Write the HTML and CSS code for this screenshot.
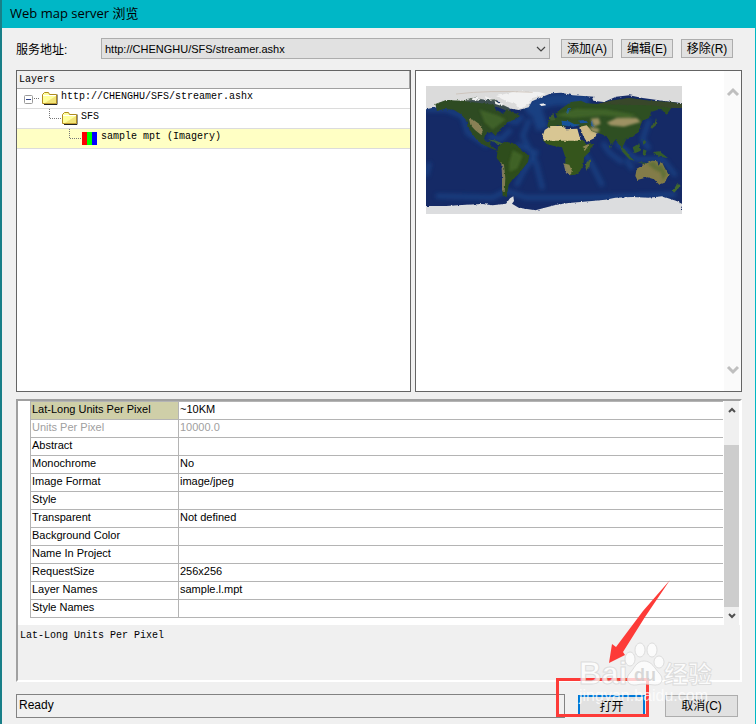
FILE: index.html
```html
<!DOCTYPE html>
<html lang="zh-CN">
  <head>
    <meta charset="UTF-8" />
    <meta name="viewport" content="width=device-width, initial-scale=1.0" />
    <title>Web map server 浏览</title>
    <link rel="stylesheet" href="styles.css">
  </head>
  <body>
    <div class="window">
      <header class="titlebar">Web map server 浏览</header>

      <main class="content">
        <div class="toolbar">
          <label for="server">服务地址:</label>
          <div class="combo">
            <select id="server">
              <option>http://CHENGHU/SFS/streamer.ashx</option>
            </select>
            <svg class="combo-arrow" width="10" height="6" viewBox="0 0 10 6">
              <path d="M1 1l4 4 4-4" fill="none" stroke="#444" stroke-width="1.2" />
            </svg>
          </div>
          <button type="button">添加(A)</button>
          <button type="button">编辑(E)</button>
          <button type="button">移除(R)</button>
        </div>

        <div class="panes">
          <section class="pane layers">
            <div class="layers-head">Layers</div>
            <ul class="tree">
              <li class="root">
                <svg width="18" height="20" viewBox="0 0 18 20">
                  <rect x="0.5" y="6.500" width="8" height="8" rx="1" fill="#fff" stroke="#999" />
                  <path d="M2 10.500h5" stroke="#2b3f8c" />
                  <path d="M10 9.500h6" stroke="#777" stroke-dasharray="1 1" />
                </svg>
                <svg width="16" height="20" viewBox="0 0 16 20">
                  <path d="M2 15.500h13V5.500" fill="none" stroke="#222" />
                  <path d="M.5 14.500v-9l2-2h4l1 2h7v9z" fill="#ffff9c" stroke="#b08c20" />
                  <path d="M1 6.500h13" stroke="#fff" />
                  <path d="M14 7v7.500H2z" fill="#e8d060" opacity=".6" />
                </svg>
                <span>http://CHENGHU/SFS/streamer.ashx</span>
              </li>
              <li class="level-1">
                <svg width="13" height="20" viewBox="0 0 13 20">
                  <path d="M.5 0v9.500H12" fill="none" stroke="#777" stroke-dasharray="1 1" />
                </svg>
                <svg width="16" height="20" viewBox="0 0 16 20">
                  <path d="M2 15.500h13V5.500" fill="none" stroke="#222" />
                  <path d="M.5 14.500v-9l2-2h4l1 2h7v9z" fill="#ffff9c" stroke="#b08c20" />
                  <path d="M1 6.500h13" stroke="#fff" />
                  <path d="M14 7v7.500H2z" fill="#e8d060" opacity=".6" />
                </svg>
                <span>SFS</span>
              </li>
              <li class="level-2 selected">
                <svg width="13" height="20" viewBox="0 0 13 20">
                  <path d="M.5 0v9.500H12" fill="none" stroke="#777" stroke-dasharray="1 1" />
                </svg>
                <svg width="16" height="20" viewBox="0 0 16 20">
                  <path fill="#f00" d="M0 3h5v13H0z" />
                  <path fill="#0f0" d="M5 3h5v13H5z" />
                  <path fill="#00f" d="M10 3h5v13h-5z" />
                </svg>
                <span>sample mpt (Imagery)</span>
              </li>
            </ul>
          </section>

          <section class="pane preview">
            <svg class="map" width="256" height="128" viewBox="30 30 768 384" role="img" aria-label="World map">
              <defs>
                <filter id="soft" x="-5%" y="-5%" width="110%" height="110%">
                  <feTurbulence type="fractalNoise" baseFrequency="0.1" numOctaves="2" seed="4" result="n" />
                  <feDisplacementMap in="SourceGraphic" in2="n" scale="8" xChannelSelector="R" yChannelSelector="G" />
                  <feGaussianBlur stdDeviation="1.500" />
                </filter>
                <filter id="haze">
                  <feGaussianBlur stdDeviation="7" />
                </filter>
                <filter id="shade">
                  <feGaussianBlur stdDeviation="3" />
                </filter>
              </defs>
              <rect x="30" y="30" width="768" height="384" fill="#152a66" />
              <!-- shallow seas and ridges -->
              <g fill="none" stroke="#1b4f94" stroke-width="14" opacity=".6" filter="url(#haze)">
                <path stroke-width="36" d="M330 105l40-25 50-10 100 5M360 100l20 60" />
                <path d="M30 100l60 0 50 20 15 50 60 40M240 120l60 20 20-20M215 180l40 10 30-30M300 205l60 25-40 60-20 40" />
                <path d="M340 130l-20 50 40 80 20 80M500 220l30 50 30 60M560 200l20 30 40 30M600 200l60 50 80 0 40 50" />
                <path d="M700 130l-20 60 20 30M650 280l-20-30M30 300l10-40M60 360l170 5 40-20 60 20 200 0 250-10" />
              </g>
              <g filter="url(#soft)">
                <!-- ice -->
                <path fill="#dbdbdb" d="M0 0h840v82h-40l-60-8-60-8-40-8-40 4-36 16-36-4 8-12-66-4-34-8-30 2-26 10-32 14-10 18-30 8-22-4-28-10-10-14-70-4-30 8-10 8-40 6-40 2-38 8H0z" />
                <path fill="#dcdddf" d="M0 390l90 0 60-4 50-2 30 4 40-5 12-16 10-6 2 14-6 8 20 12 50 8 60-16 40-6 70-6 40-4 30-6 50-2 50 2 40-4 44 14 18 10-6 14h50v60H0z" />
                <path fill="#f1f1f1" d="M240 60l60-14 70 2 20 6-40 12-10 16-18 12-14 4-10-14-26-8z" />
                <!-- canadian arctic -->
                <path fill="#435547" d="M150 70l26-6 30 8 30-2 14 12 14 6 20 10-8 8-30-12-40-6-60-6z" opacity=".8" />
                <path fill="#f0f0f0" d="M170 64l24 4-6 6-20-2zM205 60l22 8-14 5zM236 74l12 8 14 0-4 8-20-6z" />
                <!-- north america -->
                <path fill="#2e4c24" d="M58 84l32-12 50 2 44 6 50 6 4 14 24 14 10-14 16 6 24 14-14 10-22 8-16 14-14 14-7 14-12-12-18 6-5 14 8 10 13-2-3 10 16 12 6 6-20-7-25-12-16-12-16-22-12-20-5-20-17-18-20-12-30-2-20 6z" />
                <path fill="#a08d60" d="M159 128l14 4 22 16 6 18-6 10-18-14-14-16z" opacity=".8" />
                <path fill="#3e6232" d="M216 190l24 4 24 10-12 2-20-8z" />
                <path fill="#eee" d="M370 84l16-2 4 6-14 2z" />
                <!-- south america -->
                <path fill="#2d4d1d" d="M246 212l18-14 24 2 22 12 8 14 22 12-4 20-14 18-16 20-16 14-12 16-6 36-12-2-2-36 4-40-6-20-14-18z" />
                <path fill="#958763" d="M256 258l8 8 4 40-2 40-8-4 0-44z" opacity=".8" />
                <!-- europe and asia -->
                <path fill="#2f5022" d="M394 152l2-20 28-8-6-12 22-17 25-17 30-4 16 8 34 2 40-10 55-8 60 8 60 4 50 6v12h-44l-15 20-16-18-30 10-6 18-20 8-6 16-6 18-16 14-18 4-8 16-6 14-14-14-4-14-16 20-6-16-8-12-22-8-20-4-20-10-20-8-20-2-30 4-14-4-20 8z" />
                <path fill="#3b4230" d="M545 84l40-10 55-8 60 8 60 4 50 6v12h-44l-60-8-100-2z" opacity=".7" />
                <path fill="#19529a" d="M436 134l22 2 16 8 20 2-20 6-36-4zM486 134l22-2 8 8-22 2zM524 142l5-10 5 16-5 10zM450 110l6-14 6 0-4 16z" />
                <!-- africa -->
                <path fill="#35551e" d="M380 192l120 0 12 14 20-2-8 20-20 20-2 24-12 20-12 8-16 2-14-24 0-30-10-30-24-4-22-6z" />
                <path fill="#d8c693" d="M386 162l18-12 38 0 8 10 34-2 10 36-110 0-4-14z" />
                <path fill="#a39361" d="M442 262l18 4 8 18-6 14-12-6z" opacity=".8" />
                <path fill="#a3935c" d="M500 212l22-10-16 24z" opacity=".8" />
                <path fill="#cdb985" d="M492 152l20-4 16 18 16 6-8 14-24 12-12-22z" />
                <path fill="#4c662d" d="M512 258l12-8-4 24-8 10-4-10z" />
                <!-- islands -->
                <path fill="#355c2c" d="M612 210l14 10 18 24 12 10-16-4-22-24zM650 214l20-12 4 22-18 8zM682 220l10 4-6 16-6-6zM710 228l20-2 26 20-24-4zM664 258l38 4-18 2zM680 190l10 10-8 6zM578 208l6 2-2 8z" />
                <path fill="#3c5c2d" d="M400 122l12-8 6 18-14 2zM702 152l14-10 4-16 4 18-16 14z" />
                <!-- australia -->
                <path fill="#837c49" d="M658 300l4-22 26-14 20-10 16 2 4 14 8-16 10 22 12 20-12 24-16 6-16-16-20-6-30 8z" />
                <path fill="#42682f" d="M786 320l8 10-20 20-4-6z" />
              </g>
              <g filter="url(#shade)">
                <path fill="#50752e" d="M190 100l60 20 20 10-40 30-24-20zM420 118l60-20 90 2 90 16-20 10-80-8-90 8zM290 222l30 16-16 40-24 10 0-30z" opacity=".55" />
                <path fill="#9d9263" d="M524 128l24-2 6 18-20 8zM572 140l30-14 60 0 12 12-50 14-40-4zM520 152l30 6-4 12-20-4z" />
                <path fill="#4c6b2b" d="M694 262l20-6 12 14 12-4 14 28-12 20-6-24-20-10z" opacity=".6" />
              </g>
              <path d="M120 54q100-12 230-5" fill="none" stroke="#c7b9ad" stroke-width="2" />
            </svg>
            <div class="scrollbar disabled">
              <svg width="14" height="10" viewBox="0 0 14 10"><path d="M2 8l5-5 5 5" /></svg>
              <svg width="14" height="10" viewBox="0 0 14 10"><path d="M2 2l5 5 5-5" /></svg>
            </div>
          </section>
        </div>

        <section class="properties">
          <div class="grid-area">
            <table>
              <tr class="current"><th scope="row">Lat-Long Units Per Pixel</th><td>~10KM</td></tr>
              <tr class="readonly"><th scope="row">Units Per Pixel</th><td>10000.0</td></tr>
              <tr><th scope="row">Abstract</th><td></td></tr>
              <tr><th scope="row">Monochrome</th><td>No</td></tr>
              <tr><th scope="row">Image Format</th><td>image/jpeg</td></tr>
              <tr><th scope="row">Style</th><td></td></tr>
              <tr><th scope="row">Transparent</th><td>Not defined</td></tr>
              <tr><th scope="row">Background Color</th><td></td></tr>
              <tr><th scope="row">Name In Project</th><td></td></tr>
              <tr><th scope="row">RequestSize</th><td>256x256</td></tr>
              <tr><th scope="row">Layer Names</th><td>sample.l.mpt</td></tr>
              <tr><th scope="row">Style Names</th><td></td></tr>
            </table>
            <div class="scrollbar">
              <svg width="8" height="6" viewBox="0 0 8 6"><path d="M1 5l3-3 3 3" /></svg>
              <div class="thumb"></div>
              <svg width="8" height="6" viewBox="0 0 8 6"><path d="M1 1l3 3 3-3" /></svg>
            </div>
          </div>
          <p class="description">Lat-Long Units Per Pixel</p>
        </section>

        <footer class="footer">
          <div class="status">Ready</div>
          <button type="button" class="open">打开</button>
          <button type="button" class="cancel">取消(C)</button>

          <svg class="overlay" width="190" height="146" viewBox="552 578 190 146">
            <path d="M670 580L643 611 616 647l-4-3-3 19 16-8-2-3 22-35z" fill="#fd3b38" />
            <path d="M556 679.500h91.500v36H557.500v-36" fill="none" stroke="#fd3b38" stroke-width="3" />
            <g class="watermark">
              <text x="579" y="684" class="wm-bai">Bai</text>
              <ellipse cx="630" cy="659" rx="5" ry="7" />
              <ellipse cx="640" cy="650" rx="5" ry="7" />
              <ellipse cx="652" cy="650" rx="5" ry="7" />
              <ellipse cx="659" cy="662" rx="5" ry="6" />
              <path d="M644 661c-8 0-10 8-14 12-5 5-3 12 4 12 4 0 6-1 10-1s7 1 11 1c8 0 9-7 4-12-4-4-7-12-15-12z" />
              <text x="634" y="681" class="wm-du">du</text>
              <text x="664" y="683" class="wm-cn">经验</text>
              <text x="579" y="701" class="wm-url">jingyan.baidu.com</text>
            </g>
          </svg>
        </footer>
      </main>
    </div>
  </body>
</html>
```
FILE: styles.css
```css
* {
  box-sizing: border-box;
}
body {
  margin: 0;
  background: #f0f0f0;
  color: #000;
  font-family: "Liberation Sans", "Noto Sans CJK SC", sans-serif;
  font-size: 12px;
}
.window {
  display: flex;
  flex-direction: column;
  min-height: 100vh;
  border-left: 2px solid #187f88;
  border-right: 1px solid #00b7c3;
}
.titlebar {
  height: 28px;
  padding-left: 8px;
  background: #00b7c6;
  font-family: "Open Sans", "Noto Sans CJK SC", sans-serif;
  font-size: 13px;
  line-height: 26px;
}
.content {
  flex: 1;
  display: flex;
  flex-direction: column;
  padding: 10px 13px 6px 14px;
}

/* server address row */
.toolbar {
  display: flex;
  align-items: center;
  gap: 8px;
  height: 21px;
  margin-right: 9px;
}
.toolbar label {
  width: 77px;
  padding-top: 2px;
  line-height: 20px;
}
.combo {
  position: relative;
  flex: 1;
  margin-right: 3px;
}
select {
  display: block;
  width: 100%;
  height: 21px;
  padding: 0 20px 0 3px;
  border: 1px solid #adadad;
  border-radius: 0;
  background: #e1e1e1;
  color: #000;
  font: inherit;
  font-size: 11px;
  appearance: none;
}
.combo-arrow {
  position: absolute;
  right: 4px;
  top: 8px;
  pointer-events: none;
}
button {
  width: 52px;
  height: 19px;
  padding: 0;
  border: 1px solid #adadad;
  background: #e1e1e1;
  color: #000;
  font: inherit;
  line-height: 16px;
}

/* layer tree and preview */
.panes {
  flex: 1;
  display: grid;
  grid-template-columns: 395fr 327fr;
  gap: 4px;
  margin-top: 11px;
}
.pane {
  border: 1px solid #646464;
  background: #fff;
}
.layers,
.description {
  font-family: "Liberation Mono", monospace;
  font-size: 10px;
}
.layers-head {
  height: 18px;
  padding-left: 2px;
  border-right: 1px solid #a0a0a0;
  border-bottom: 1px solid #a0a0a0;
  background: #f0f0f0;
  line-height: 18px;
}
.tree {
  margin: 0;
  padding: 0;
  list-style: none;
}
.tree li {
  display: flex;
  height: 20px;
  border-bottom: 1px solid #dcdcdc;
  line-height: 16px;
}
.tree svg {
  flex: none;
}
.tree span {
  margin-left: 3px;
}
.root {
  padding-left: 7px;
}
.level-1 {
  padding-left: 32px;
}
.level-2 {
  padding-left: 52px;
}
.selected {
  background: #ffffc4;
}
.preview {
  display: flex;
  justify-content: space-between;
}
.map {
  margin: 15px 0 0 10px;
}

.scrollbar {
  display: flex;
  flex-direction: column;
  align-items: center;
  width: 15px;
  padding: 6px 0;
  background: #f0f0f0;
}
.scrollbar path {
  fill: none;
  stroke: #505050;
  stroke-width: 2;
}
.disabled {
  justify-content: space-between;
  width: 17px;
  padding: 16px 0;
  background: #fafafa;
}
.disabled path {
  stroke: #bfbfbf;
  stroke-width: 3;
}

/* property grid */
.properties {
  margin-top: 7px;
  border: 2px solid #a0a0a0;
  border-right-color: #fff;
  border-bottom-color: #fff;
}
.grid-area {
  display: flex;
  align-items: stretch;
  gap: 1px;
  padding: 0 1px 0 12px;
  background: #fff;
}
table {
  flex: 1;
  margin-bottom: 7px;
  border-collapse: collapse;
  table-layout: fixed;
  font-size: 11px;
}
th,
td {
  height: 18px;
  padding: 0 1px 3px;
  border: 1px solid #b4b4b4;
  border-right: none;
  font-weight: normal;
  line-height: 14px;
  text-align: left;
}
th {
  width: 148px;
}
.current th {
  background: #cfcfa8;
}
.readonly th,
.readonly td {
  color: #a0a0a0;
}
.thumb {
  flex: 1;
  width: 100%;
  margin: 32px 0 6px;
  background: #cdcdcd;
}
.description {
  height: 55px;
  margin: 0;
  padding: 3px 2px;
  line-height: 16px;
}

/* status bar and dialog buttons */
.footer {
  position: relative;
  display: flex;
  align-items: center;
  height: 24px;
  margin-top: 12px;
  padding-right: 4px;
}
.status {
  flex: 1;
  height: 24px;
  padding-left: 2px;
  border: 1px solid #828282;
  line-height: 20px;
}
.footer button {
  height: 22px;
  line-height: 20px;
}
.footer .open {
  width: 67px;
  margin: 0 20px 0 13px;
  border: 2px solid #0078d7;
}
.footer .cancel {
  width: 73px;
}

.overlay {
  position: absolute;
  right: 0;
  bottom: -6px;
  pointer-events: none;
}
.watermark {
  fill: #fff;
  fill-opacity: 0.75;
  stroke: #ccc;
  stroke-opacity: 0.6;
  font-family: "Liberation Sans", "Noto Sans CJK SC", sans-serif;
}
.wm-bai {
  font-size: 31px;
  font-weight: bold;
}
.wm-du {
  fill: #ccc;
  stroke: none;
  font-size: 18px;
  font-weight: bold;
}
.wm-cn {
  font-size: 24px;
  font-weight: bold;
}
.wm-url {
  stroke: none;
  font-size: 16px;
}
```
